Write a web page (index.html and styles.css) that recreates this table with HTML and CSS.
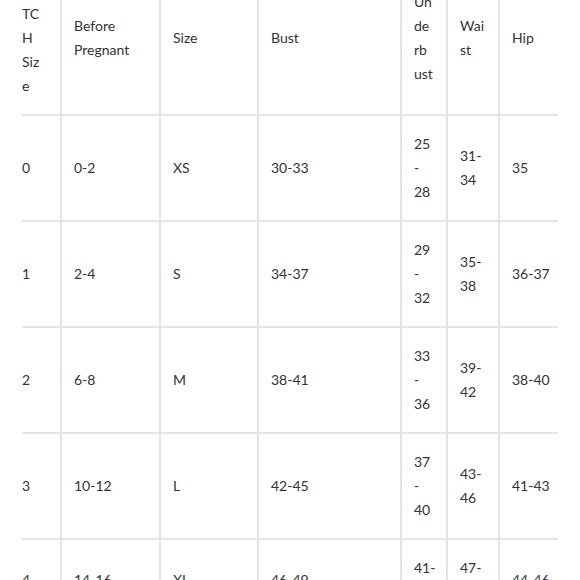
FILE: index.html
```html
<!DOCTYPE html>
<html>
<head>
<meta charset="utf-8">
<link rel="stylesheet" href="styles.css">
</head>
<body>
<table class="size-table">
  <colgroup>
    <col class="c1"><col class="c2"><col class="c3"><col class="c4"><col class="c5"><col class="c6"><col class="c7">
  </colgroup>
  <thead>
    <tr>
      <th><br>TCH Size</th>
      <th>Before Pregnant</th>
      <th>Size</th>
      <th>Bust</th>
      <th>Underbust</th>
      <th>Waist</th>
      <th>Hip</th>
    </tr>
  </thead>
  <tbody>
    <tr><td>0</td><td>0-2</td><td>XS</td><td>30-33</td><td>25 - 28</td><td>31-34</td><td>35</td></tr>
    <tr><td>1</td><td>2-4</td><td>S</td><td>34-37</td><td>29 - 32</td><td>35-38</td><td>36-37</td></tr>
    <tr><td>2</td><td>6-8</td><td>M</td><td>38-41</td><td>33 - 36</td><td>39-42</td><td>38-40</td></tr>
    <tr><td>3</td><td>10-12</td><td>L</td><td>42-45</td><td>37 - 40</td><td>43-46</td><td>41-43</td></tr>
    <tr><td>4</td><td>14-16</td><td>XL</td><td>46-49</td><td>41-44</td><td>47-50</td><td>44-46</td></tr>
  </tbody>
</table>
</body>
</html>
```

FILE: styles.css
```css
html, body {
  margin: 0;
  padding: 0;
  background: #ffffff;
}

body {
  font-family: Lato, "Open Sans", sans-serif;
  font-size: 14px;
  color: #333333;
}

.size-table {
  margin: -38px 0 0 22px;
  width: 536px;
  table-layout: fixed;
  border-collapse: separate;
  border-spacing: 0;
}

.c1 { width: 38px; }
.c2 { width: 99px; }
.c3 { width: 98px; }
.c4 { width: 143px; }
.c5 { width: 46px; }
.c6 { width: 52px; }
.c7 { width: 60px; }

.size-table th,
.size-table td {
  font-weight: 400;
  text-align: left;
  vertical-align: middle;
  line-height: 24px;
  padding: 16px 12px;
  border-bottom: 2px solid #e4e4e4;
  border-left: 2px solid #e4e4e4;
  overflow-wrap: anywhere;
}

.size-table th:first-child,
.size-table td:first-child {
  border-left: none;
  padding-left: 0;
  padding-right: 16px;
}

.size-table td:nth-child(5) {
  padding-right: 10px;
}

.size-table th:last-child,
.size-table td:last-child {
  padding-right: 8px;
}
```
